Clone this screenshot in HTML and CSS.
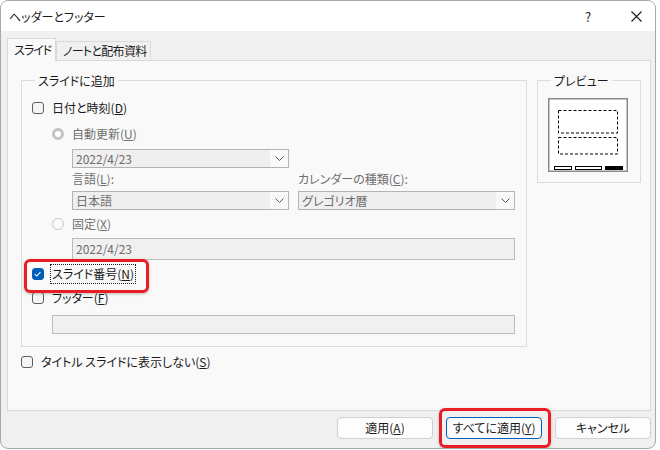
FILE: index.html
```html
<!DOCTYPE html>
<html lang="ja">
<head>
<meta charset="utf-8">
<link rel="stylesheet" href="styles.css">
</head>
<body>
<div class="window">
  <div class="titlebar">
    <span class="title">ヘッダーとフッター</span>
    <span class="help">?</span>
    <span class="close"><svg width="11" height="11" viewBox="0 0 11 11"><path d="M0.5 0.5 L10.5 10.5 M10.5 0.5 L0.5 10.5" stroke="#1a1a1a" stroke-width="1.1" fill="none"/></svg></span>
  </div>
  <div class="body">
    <div class="tabs">
      <div class="tab active">スライド</div>
      <div class="tab">ノートと配布資料</div>
    </div>
    <div class="panel">
      <div class="row">
        <fieldset class="group main">
          <legend>スライドに追加</legend>
          <div class="item r-date">
            <span class="cb"></span><span class="lbl">日付と時刻(<u>D</u>)</span>
          </div>
          <div class="item r-auto sub">
            <span class="radio on"></span><span class="lbl dis">自動更新(<u>U</u>)</span>
          </div>
          <div class="combo c1"><span class="val">2022/4/23</span><span class="arrow"><svg width="9" height="5" viewBox="0 0 9 5"><path d="M0.5 0.5 L4.5 4.5 L8.5 0.5" stroke="#555" stroke-width="1" fill="none"/></svg></span></div>
          <div class="grid2">
            <span class="flabel dis">言語(<u>L</u>):</span>
            <span class="flabel dis">カレンダーの種類(<u>C</u>):</span>
            <div class="combo"><span class="val">日本語</span><span class="arrow"><svg width="9" height="5" viewBox="0 0 9 5"><path d="M0.5 0.5 L4.5 4.5 L8.5 0.5" stroke="#555" stroke-width="1" fill="none"/></svg></span></div>
            <div class="combo"><span class="val">グレゴリオ暦</span><span class="arrow"><svg width="9" height="5" viewBox="0 0 9 5"><path d="M0.5 0.5 L4.5 4.5 L8.5 0.5" stroke="#555" stroke-width="1" fill="none"/></svg></span></div>
          </div>
          <div class="item r-fixed sub">
            <span class="radio"></span><span class="lbl dis">固定(<u>X</u>)</span>
          </div>
          <div class="textbox t-fixed">2022/4/23</div>
          <div class="item r-num">
            <span class="cb checked"><svg width="12" height="12" viewBox="0 0 12 12"><path d="M3 6.2 L5.2 8.3 L9.2 3.9" stroke="#fff" stroke-width="1.1" fill="none"/></svg></span><span class="lbl focus">スライド番号(<u>N</u>)</span>
          </div>
          <div class="item r-foot">
            <span class="cb"></span><span class="lbl">フッター(<u>F</u>)</span>
          </div>
          <div class="textbox t-foot"></div>
        </fieldset>
        <fieldset class="group preview">
          <legend>プレビュー</legend>
          <svg class="pv" width="80" height="74" viewBox="0 0 80 74">
            <rect x="0.75" y="0.75" width="78.5" height="72.5" fill="#fff" stroke="#8a8a8a" stroke-width="1.5"/>
            <rect x="10.5" y="12.5" width="59" height="22.5" fill="none" stroke="#000" stroke-width="1" stroke-dasharray="3 2"/>
            <rect x="10.5" y="39.5" width="59" height="16.5" fill="none" stroke="#000" stroke-width="1" stroke-dasharray="3 2"/>
            <rect x="6.5" y="68.5" width="17" height="3" fill="#fff" stroke="#000" stroke-width="1"/>
            <rect x="27.5" y="68.5" width="26" height="3" fill="#fff" stroke="#000" stroke-width="1"/>
            <rect x="57" y="68" width="18" height="4" fill="#000"/>
          </svg>
        </fieldset>
      </div>
      <div class="item r-title">
        <span class="cb"></span><span class="lbl">タイトル スライドに表示しない(<u>S</u>)</span>
      </div>
    </div>
    <div class="buttons">
      <button class="btn">適用(<u>A</u>)</button>
      <button class="btn default">すべてに適用(<u>Y</u>)</button>
      <button class="btn">キャンセル</button>
    </div>
  </div>
  <div class="mark mark1"></div>
  <div class="mark mark2"></div>
</div>
</body>
</html>
```

FILE: styles.css
```css
* { box-sizing: border-box; }
html, body { margin: 0; padding: 0; background: #ffffff; }
body {
  font-family: "Noto Sans CJK JP", "Noto Sans", sans-serif;
  font-size: 12px;
  font-feature-settings: "palt";
  color: #1a1a1a;
}
u { text-decoration: underline; text-underline-offset: 1px; }

.window {
  position: relative;
  width: 656px;
  height: 449px;
  border: 1px solid #a9a9a9;
  border-radius: 8px;
  overflow: hidden;
  display: flex;
  flex-direction: column;
  background: #f0f0f0;
}

.titlebar {
  height: 30px;
  flex: none;
  background: #ffffff;
  display: flex;
  align-items: center;
  padding-left: 8px;
}
.title { flex: 1; line-height: 16px; margin-top: 1px; }
.help { width: 10px; font-size: 13px; margin-right: 36px; margin-top: 1px; }
.close { width: 11px; height: 11px; margin-right: 13px; display: flex; }

.body {
  flex: 1;
  display: flex;
  flex-direction: column;
  padding: 7px 4px 0 6px;
}

.tabs {
  display: flex;
  align-items: flex-end;
  height: 22px;
}
.tab {
  height: 19px;
  width: 95px;
  flex: none;
  border: 1px solid #d9d9d9;
  border-bottom: none;
  background: #f0f0f0;
  padding: 0 0 0 6px;
  line-height: 18px;
  white-space: nowrap;
  overflow: visible;
  letter-spacing: -0.7px;
}
.tab.active {
  position: relative;
  z-index: 1;
  height: 23px;
  width: 49px;
  margin-bottom: -1px;
  background: #f9f9f9;
  line-height: 22px;
  padding-left: 6px;
  letter-spacing: -1px;
}

.panel {
  height: 351px;
  border: 1px solid #d9d9d9;
  background: #f9f9f9;
  padding: 11px 0 0 13px;
}

.row { display: flex; align-items: flex-start; }

.group {
  margin: 0;
  padding: 0;
  border: 1px solid #dcdcdc;
  min-width: 0;
}
.group legend {
  margin-left: 3px;
  padding: 0 3px;
  line-height: 17px;
  height: 17px;
}

.main {
  width: 506px;
  display: flex;
  flex-direction: column;
  padding: 0 0 12px 10px;
}
.preview {
  width: 104px;
  margin-left: 10px;
  padding: 9px 0 10px 10px;
}
.pv { display: block; }

.item {
  display: flex;
  align-items: center;
  height: 20px;
}
.item .lbl { line-height: 18px; }
.item.sub { padding-left: 20px; }

.r-date { margin-top: 9px; }
.r-auto { margin-top: 6px; }
.r-fixed { margin-top: 4px; }
.r-num { margin-top: 4px; }
.r-foot { margin-top: 4px; }
.r-title { margin-top: 5px; }

.cb {
  width: 12px;
  height: 12px;
  border: 1px solid #5e5e5e;
  border-radius: 3px;
  background: #f5f5f5;
  margin-right: 8px;
  flex: none;
  display: flex;
}
.cb.checked { background: #005fb8; border-color: #005fb8; margin-right: 6px; }
.cb.checked svg { margin: -1px 0 0 -1px; }

.radio {
  width: 12px;
  height: 12px;
  border-radius: 50%;
  border: 1px solid #c6c6c6;
  background: #fbfbfb;
  margin-right: 8px;
  flex: none;
}
.radio.on {
  border: 3.5px solid #c3c3c3;
  background: #ffffff;
}

.dis { color: #6f6f6f; }

.lbl.focus {
  border: 1px dotted #1a1a1a;
  padding: 0 1px;
  line-height: 18px;
}

.combo {
  height: 19px;
  border: 1px solid #b3b3b3;
  background: #efefef;
  display: flex;
  align-items: center;
  color: #6d6d6d;
}
.combo .val { flex: 1; padding-left: 3px; line-height: 17px; }
.combo .arrow {
  width: 18px;
  height: 17px;
  background: #f9f9f9;
  display: flex;
  align-items: center;
  justify-content: center;
}
.c1 { width: 217px; margin: 5px 0 0 40px; }

.grid2 {
  display: grid;
  grid-template-columns: 217px 217px;
  column-gap: 9px;
  margin: 2px 0 0 40px;
}
.flabel { line-height: 18px; height: 18px; margin-bottom: 3px; }

.textbox {
  border: 1px solid #bcbcbc;
  background: #f0f0f0;
  color: #6d6d6d;
  padding-left: 3px;
}
.t-fixed { width: 443px; height: 22px; line-height: 20px; margin: 4px 0 0 40px; }
.t-foot { width: 463px; height: 19px; margin: 7px 0 0 20px; }

.r-title .cb { margin-right: 8px; }

.buttons {
  display: flex;
  justify-content: flex-end;
  gap: 13px;
  margin-top: 6px;
}
.btn {
  width: 96px;
  height: 22px;
  border: 1px solid #d0d0d0;
  border-radius: 4px;
  background: #fdfdfd;
  font-family: inherit;
  font-size: 12px;
  font-feature-settings: "palt";
  color: #1a1a1a;
  padding: 0;
  line-height: 20px;
}
.btn.default { border-color: #005fb8; }

.mark {
  position: absolute;
  border: 3px solid #ea1c24;
  border-radius: 6px;
  box-shadow: 0 1px 3px rgba(0,0,0,0.25);
}
.mark1 { left: 23px; top: 258px; width: 125px; height: 34px; }
.mark2 { left: 438px; top: 407px; width: 112px; height: 40px; }
```
